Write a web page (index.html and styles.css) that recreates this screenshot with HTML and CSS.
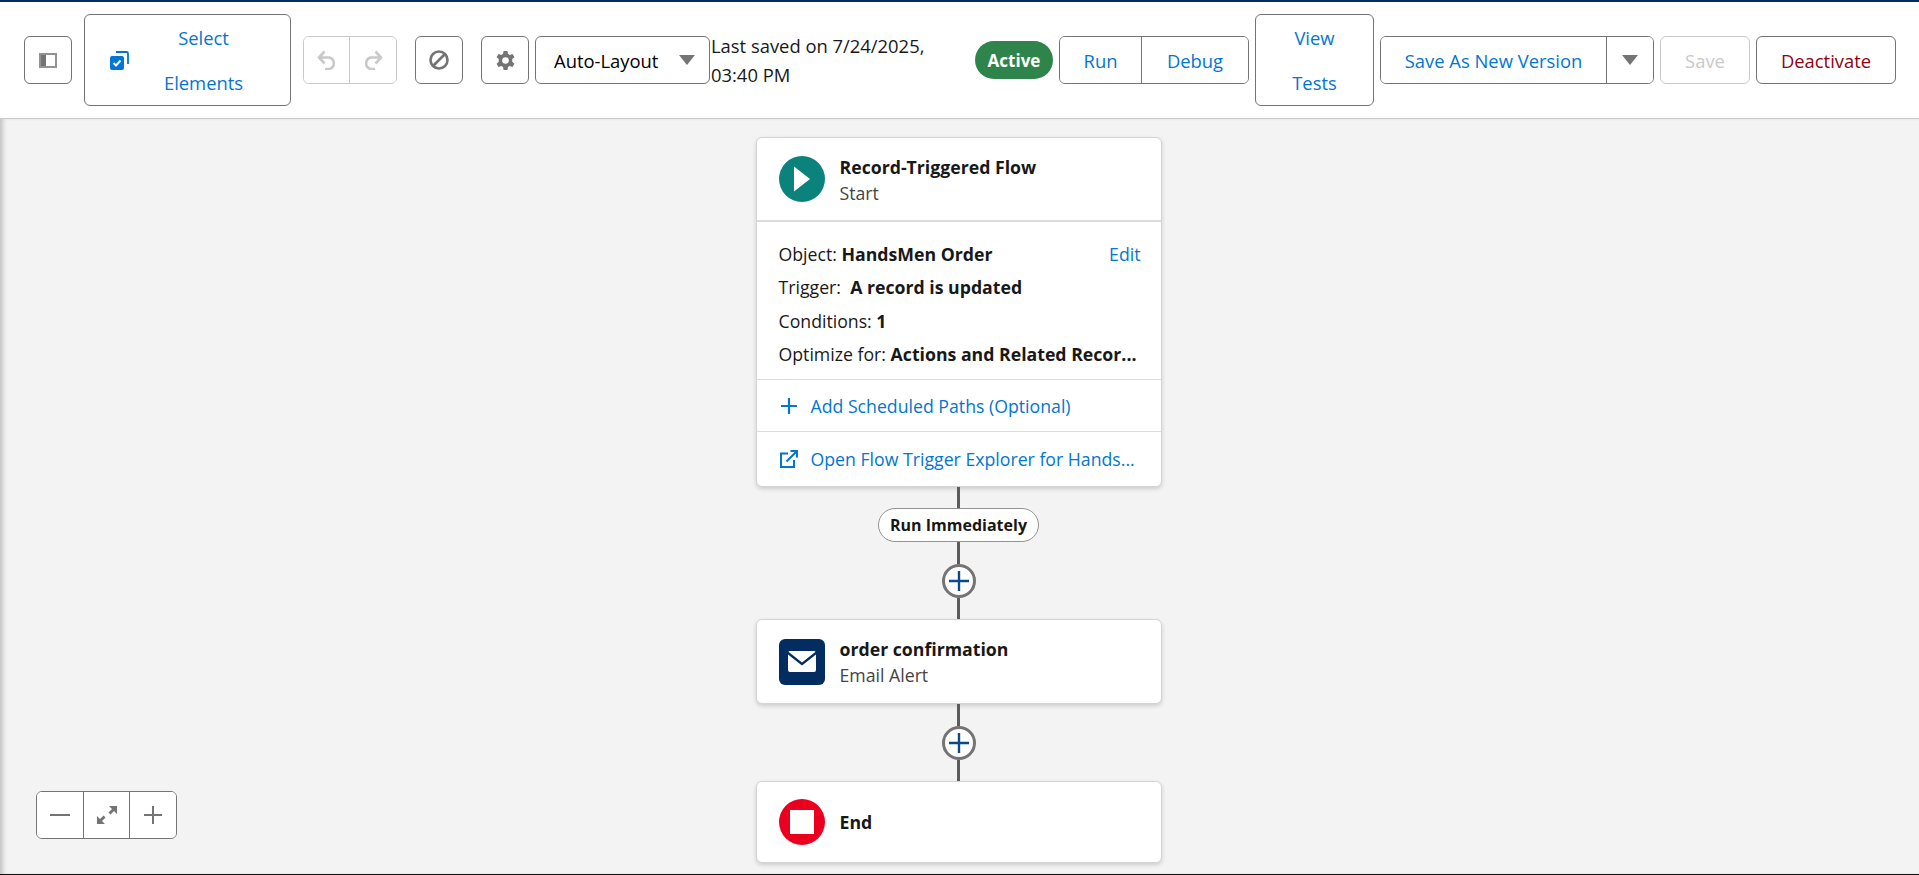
FILE: index.html
```html
<!DOCTYPE html>
<html lang="en">
<head>
    <meta charset="UTF-8">
    <meta name="viewport" content="width=device-width, initial-scale=1.0">
    <title>Flow Builder</title>
    <link rel="stylesheet" href="styles.css">
</head>
<body>
    <header class="toolbar">
        <button class="btn btn-icon" type="button" aria-label="Toggle panel">
            <svg width="18" height="15" viewBox="0 0 18 15"><rect x="1" y="1" width="16" height="13" fill="#fff" stroke="#939393" stroke-width="2"/><rect x="2" y="2" width="5" height="11" fill="#747474"/></svg>
        </button>
        <button class="btn btn-select" type="button">
            <svg class="select-icon" width="19" height="19" viewBox="0 0 19 19"><path d="M6 1h10.500A1.500 1.500 0 0 1 18 2.500V13" fill="none" stroke="#0176d3" stroke-width="1.800"/><rect x="0" y="5" width="14" height="14" rx="2" fill="#0176d3"/><path d="M3.500 12l2.500 2.500 4.500-5" fill="none" stroke="#fff" stroke-width="1.900"/></svg>
            <span class="select-label">Select Elements</span>
        </button>
        <div class="btn-group group-undo">
            <button class="btn-seg seg-undo" type="button" aria-label="Undo">
                <svg width="20" height="20" viewBox="0 0 20 20"><path d="M3 7.500h9.500a6 6 0 0 1 0 11.500H8M7.500 1.500L2 7.500l5.500 6" fill="none" stroke="#c9c9c9" stroke-width="2.600"/></svg>
            </button>
            <button class="btn-seg seg-undo" type="button" aria-label="Redo">
                <svg width="20" height="20" viewBox="0 0 20 20"><path d="M17 7.500H7.500a6 6 0 0 0 0 11.500H12M12.500 1.500L18 7.500l-5.500 6" fill="none" stroke="#c9c9c9" stroke-width="2.600"/></svg>
            </button>
        </div>
        <button class="btn btn-icon btn-block" type="button" aria-label="Disable">
            <svg width="20" height="20" viewBox="0 0 20 20"><circle cx="10" cy="10" r="8.500" fill="none" stroke="#747474" stroke-width="2.600"/><path d="M4.500 15.500L15.500 4.500" stroke="#747474" stroke-width="2.600"/></svg>
        </button>
        <button class="btn btn-icon btn-gear" type="button" aria-label="Settings">
            <svg width="19" height="19" viewBox="0 0 20 20"><path fill="#747474" fill-rule="evenodd" d="M8 0h4l.6 3 1.900 1.100 2.900-1 2 3.400-2.300 2v2.900l2.300 2-2 3.400-2.900-1-1.900 1.100-.6 3H8l-.6-3-1.900-1.100-2.900 1-2-3.400 2.300-2V8.500L.6 6.500l2-3.400 2.900 1L7.400 3zM10 6.500a3.500 3.500 0 1 0 0 7 3.500 3.500 0 0 0 0-7z"/></svg>
        </button>
        <button class="btn btn-layout" type="button">
            <span>Auto-Layout</span>
            <span class="caret"></span>
        </button>
        <p class="save-note">Last saved on 7/24/2025, 03:40 PM</p>
        <span class="status-badge">Active</span>
        <div class="btn-group group-run">
            <button class="btn-seg seg-run" type="button">Run</button>
            <button class="btn-seg seg-debug" type="button">Debug</button>
        </div>
        <button class="btn btn-tests" type="button">View Tests</button>
        <div class="btn-group group-save">
            <button class="btn-seg seg-saveas" type="button">Save As New Version</button>
            <button class="btn-seg seg-more" type="button" aria-label="More"><span class="caret"></span></button>
        </div>
        <button class="btn btn-save" type="button">Save</button>
        <button class="btn btn-deactivate" type="button">Deactivate</button>
    </header>

    <main class="canvas">
        <div class="flow">
            <section class="card card-start">
                <div class="card-head head-start">
                    <span class="node-icon icon-start">
                        <svg width="46" height="46" viewBox="0 0 46 46"><path d="M15 10.500L31 23 15 35.500z" fill="#fff"/></svg>
                    </span>
                    <div class="head-text">
                        <div class="node-title">Record-Triggered Flow</div>
                        <div class="node-sub">Start</div>
                    </div>
                </div>
                <div class="card-details">
                    <div class="detail-row"><span>Object: <b>HandsMen Order</b></span><a class="link" href="#">Edit</a></div>
                    <div class="detail-row"><span>Trigger: &nbsp;<b>A record is updated</b></span></div>
                    <div class="detail-row"><span>Conditions: <b>1</b></span></div>
                    <div class="detail-row"><span>Optimize for: <b>Actions and Related Recor...</b></span></div>
                </div>
                <a class="card-link" href="#">
                    <svg width="18" height="18" viewBox="0 0 18 18"><path d="M9 1v16M1 9h16" stroke="#0176d3" stroke-width="2.200"/></svg>
                    <span>Add Scheduled Paths (Optional)</span>
                </a>
                <a class="card-link" href="#">
                    <svg width="18" height="18" viewBox="0 0 18 18"><path d="M8 3.500H1v13.500h13v-7" fill="none" stroke="#0176d3" stroke-width="2"/><path d="M6.500 11.500L16 2M10.500 1h6.500v6.500" fill="none" stroke="#0176d3" stroke-width="2"/></svg>
                    <span>Open Flow Trigger Explorer for Hands...</span>
                </a>
            </section>

            <div class="line line-a"></div>
            <div class="run-pill">Run Immediately</div>
            <div class="line line-b"></div>
            <button class="add-node" type="button" aria-label="Add element">
                <svg width="20" height="20" viewBox="0 0 20 20"><path d="M10 0v20M0 10h20" stroke="#0b4a8a" stroke-width="2.400"/></svg>
            </button>
            <div class="line line-c"></div>

            <section class="card">
                <div class="card-head head-email">
                    <span class="node-icon icon-email">
                        <svg width="28" height="21" viewBox="0 0 28 21"><path d="M2 0h24a2 2 0 0 1 1.600.8L14 11.500.4.800A2 2 0 0 1 2 0z" fill="#fff"/><path d="M0 3.500L14 14.500 28 3.500V19a2 2 0 0 1-2 2H2a2 2 0 0 1-2-2z" fill="#fff"/></svg>
                    </span>
                    <div>
                        <div class="node-title">order confirmation</div>
                        <div class="node-sub">Email Alert</div>
                    </div>
                </div>
            </section>

            <div class="line line-d"></div>
            <button class="add-node" type="button" aria-label="Add element">
                <svg width="20" height="20" viewBox="0 0 20 20"><path d="M10 0v20M0 10h20" stroke="#0b4a8a" stroke-width="2.400"/></svg>
            </button>
            <div class="line line-e"></div>

            <section class="card">
                <div class="card-head head-end">
                    <span class="node-icon icon-end"><span class="end-square"></span></span>
                    <div class="node-title">End</div>
                </div>
            </section>
        </div>

        <div class="zoom-controls">
            <button class="zoom-btn" type="button" aria-label="Zoom out">
                <svg width="20" height="20" viewBox="0 0 20 20"><path d="M0 10h20" stroke="#747474" stroke-width="2.200"/></svg>
            </button>
            <button class="zoom-btn" type="button" aria-label="Fit to view">
                <svg width="20" height="20" viewBox="0 0 20 20"><path d="M12 1h8v8l-3-3-3.500 3.500-2-2L15 4zM8 19H0v-8l3 3 3.500-3.500 2 2L5 16z" fill="#747474"/></svg>
            </button>
            <button class="zoom-btn" type="button" aria-label="Zoom in">
                <svg width="18" height="18" viewBox="0 0 18 18"><path d="M9 0v18M0 9h18" stroke="#747474" stroke-width="2"/></svg>
            </button>
        </div>
    </main>
</body>
</html>
```

FILE: styles.css
```css
* {
    box-sizing: border-box;
}
html, body {
    margin: 0;
    height: 100%;
}
body {
    font-family: 'Open Sans', 'Noto Sans', sans-serif;
    font-size: 18.400px;
    color: #181818;
    background: #f3f3f3;
    display: flex;
    flex-direction: column;
    height: 875px;
    overflow: hidden;
    border-bottom: 1px solid #111;
}
button {
    font: inherit;
    background: #fff;
    padding: 0;
    cursor: pointer;
}
.toolbar {
    display: flex;
    align-items: center;
    height: 119px;
    flex: none;
    padding: 0 0 0 24px;
    background: #fff;
    border-top: 2px solid #032d60;
    border-bottom: 1px solid #c9c9c9;
}
.btn, .btn-group {
    height: 48px;
    border: 1px solid #747474;
    border-radius: 6px;
    background: #fff;
    flex: none;
}
.btn {
    display: flex;
    align-items: center;
    justify-content: center;
}
.btn-group {
    display: flex;
    overflow: hidden;
}
.btn-seg {
    border: 0;
    border-left: 1px solid #747474;
    display: flex;
    align-items: center;
    justify-content: center;
    height: 100%;
    color: #0176d3;
}
.btn-seg:first-child {
    border-left: 0;
}
.btn-icon {
    width: 48px;
}
.btn-select {
    width: 207px;
    height: 92px;
    margin-left: 12px;
    color: #0176d3;
    padding: 0 24px 0 25px;
    justify-content: flex-start;
}
.select-icon {
    flex: none;
}
.select-label {
    flex: 1;
    line-height: 45px;
    padding: 0 18px 0 30px;
    text-align: center;
}
.group-undo {
    width: 94px;
    margin-left: 12px;
    border-color: #c9c9c9;
}
.seg-undo {
    flex: 1;
    border-color: #c9c9c9;
}
.seg-undo:first-child {
    flex: none;
    width: 45px;
}
.btn-block {
    margin-left: 18px;
}
.btn-gear {
    margin-left: 18px;
}
.btn-layout {
    width: 175px;
    margin-left: 6px;
    justify-content: space-between;
    padding: 0 14px 0 18px;
}
.caret {
    width: 0;
    height: 0;
    border-left: 8px solid transparent;
    border-right: 8px solid transparent;
    border-top: 10px solid #747474;
}
.save-note {
    width: 240px;
    margin: 0 24px 0 1px;
    line-height: 29px;
    flex: none;
}
.status-badge {
    width: 78px;
    height: 38px;
    flex: none;
    border-radius: 19px;
    background: #2e844a;
    color: #fff;
    font-size: 17px;
    font-weight: 700;
    display: flex;
    align-items: center;
    justify-content: center;
}
.group-run {
    width: 190px;
    margin-left: 6px;
}
.seg-run {
    width: 81px;
}
.seg-debug {
    flex: 1;
}
.btn-tests {
    width: 119px;
    height: 92px;
    margin-left: 6px;
    padding: 0 30px;
    color: #0176d3;
    line-height: 45px;
    text-align: center;
}
.group-save {
    width: 274px;
    margin-left: 6px;
}
.seg-saveas {
    width: 225px;
}
.seg-more {
    flex: 1;
}
.btn-save {
    width: 90px;
    margin-left: 6px;
    border-color: #c9c9c9;
    color: #c9c9c9;
}
.btn-deactivate {
    width: 140px;
    margin-left: 6px;
    color: #8e030f;
}

.canvas {
    flex: 1;
    position: relative;
    padding-right: 2px;
    box-shadow: inset 5px 0 4px -2px #c4c4c4;
}
.flow {
    display: flex;
    flex-direction: column;
    align-items: center;
    padding-top: 18px;
    font-size: 17.700px;
}
.card {
    width: 406px;
    background: #fff;
    border: 1px solid #d4d4d4;
    border-radius: 6px;
    box-shadow: 0 2px 4px rgba(0, 0, 0, 0.16);
}
.card-head {
    display: flex;
    align-items: center;
    gap: 15px;
    padding: 0 22px;
}
.head-start {
    height: 84px;
    border-bottom: 2px solid #dcdcdc;
}
.head-text {
    padding-top: 2px;
}
.head-email {
    height: 83px;
}
.head-end {
    height: 80px;
}
.node-icon {
    width: 46px;
    height: 46px;
    flex: none;
    display: flex;
    align-items: center;
    justify-content: center;
}
.icon-start {
    background: #0b827c;
    border-radius: 50%;
}
.icon-email {
    background: #032d60;
    border-radius: 6px;
}
.icon-end {
    background: #ea001e;
    border-radius: 50%;
}
.end-square {
    width: 24px;
    height: 24px;
    background: #fff;
}
.node-title {
    font-weight: 700;
    line-height: 26px;
}
.node-sub {
    color: #444;
    line-height: 26px;
}
.card-details {
    padding: 16px 20px 8px 22px;
    border-bottom: 1px solid #dcdcdc;
}
.detail-row {
    display: flex;
    justify-content: space-between;
    white-space: nowrap;
    line-height: 33.300px;
}
.link, .card-link {
    color: #0176d3;
    text-decoration: none;
}
.card-link {
    display: flex;
    align-items: center;
    gap: 13px;
    height: 52px;
    padding: 0 22px 0 23px;
    border-bottom: 1px solid #dcdcdc;
    white-space: nowrap;
}
.card-link:last-child {
    height: 54px;
    border-bottom: 0;
}
.card-link svg {
    flex: none;
}
.line {
    width: 3px;
    background: #5c5c5c;
    flex: none;
}
.line-a {
    height: 21px;
}
.line-b {
    height: 22px;
}
.line-c {
    height: 21px;
}
.line-d {
    height: 22px;
}
.line-e {
    height: 21px;
}
.run-pill {
    width: 161px;
    height: 34px;
    flex: none;
    border: 1px solid #939393;
    border-radius: 17px;
    background: #fff;
    font-size: 16px;
    font-weight: 700;
    display: flex;
    align-items: center;
    justify-content: center;
}
.add-node {
    width: 34px;
    height: 34px;
    flex: none;
    border: 3px solid #747474;
    border-radius: 50%;
    display: flex;
    align-items: center;
    justify-content: center;
}
.zoom-controls {
    position: absolute;
    left: 36px;
    bottom: 35px;
    width: 141px;
    height: 48px;
    display: flex;
    background: #fff;
    border: 1px solid #747474;
    border-radius: 6px;
    overflow: hidden;
}
.zoom-btn {
    flex: 1;
    border: 0;
    border-left: 1px solid #747474;
    display: flex;
    align-items: center;
    justify-content: center;
}
.zoom-btn:first-child {
    border-left: 0;
}
```
